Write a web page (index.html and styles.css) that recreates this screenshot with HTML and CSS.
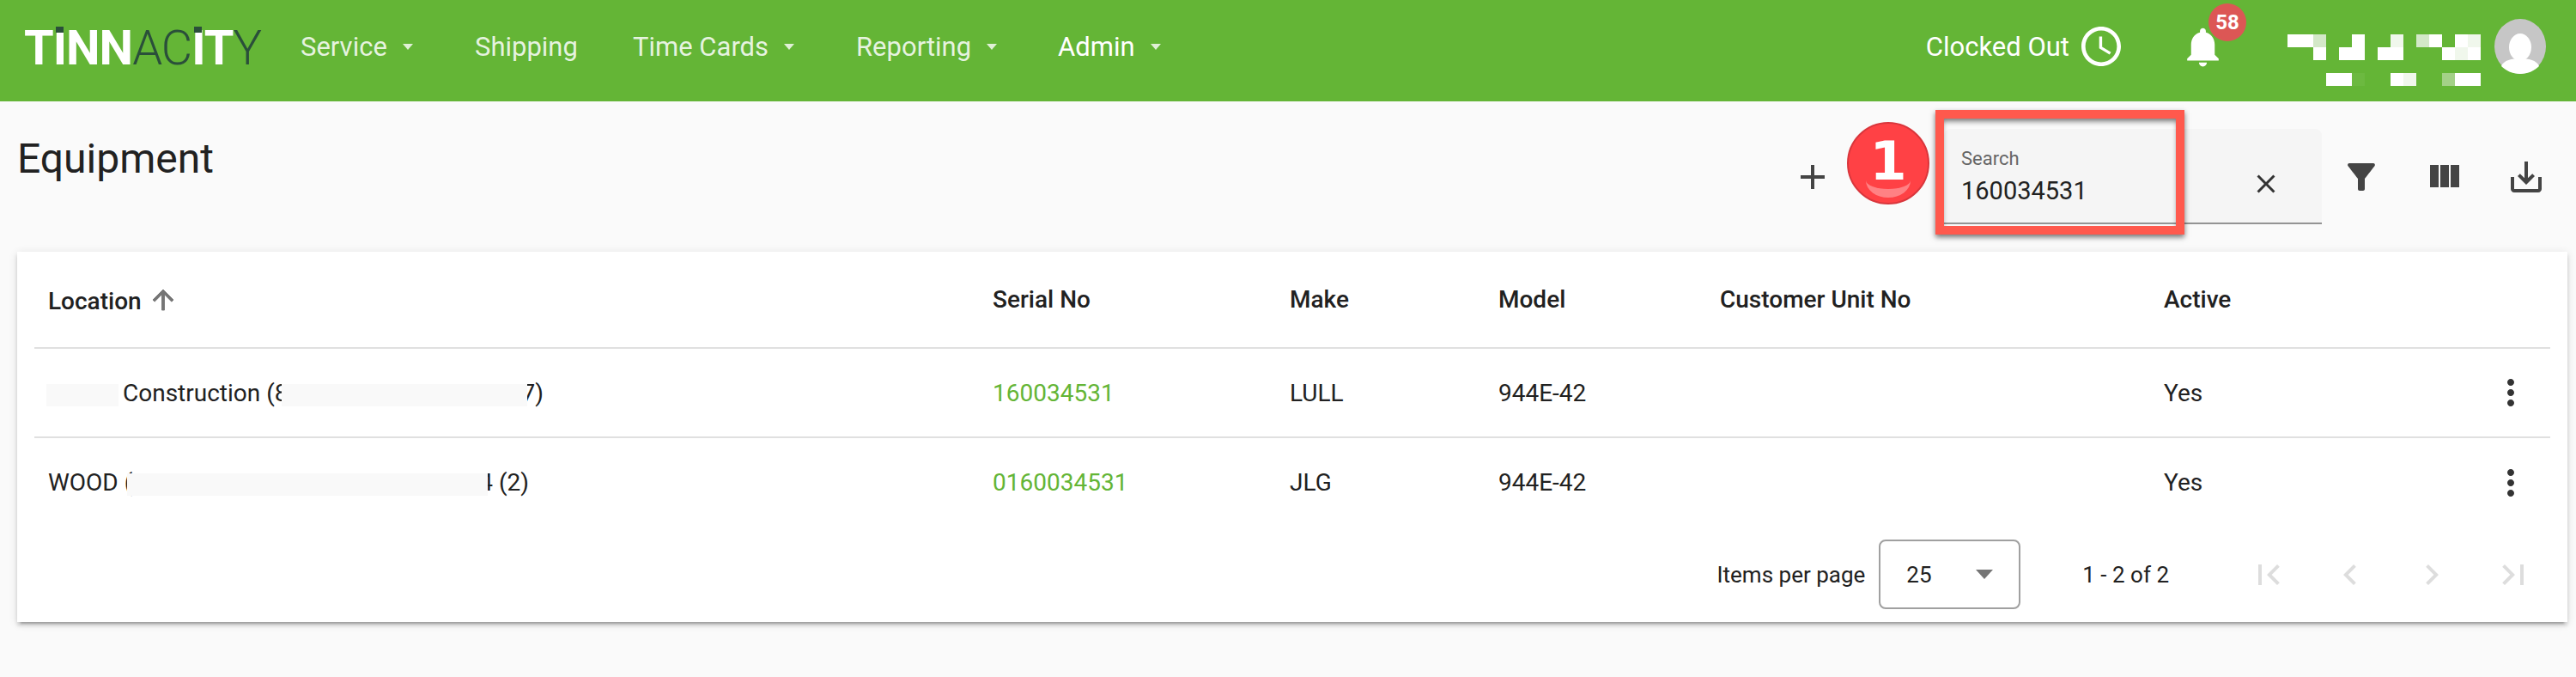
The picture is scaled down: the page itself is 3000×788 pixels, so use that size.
FILE: index.html
```html
<!DOCTYPE html>
<html lang="en">
<head>
  <meta charset="UTF-8">
  <title>Equipment</title>
  <link rel="stylesheet" href="styles.css">
</head>
<body>
  <header class="topbar">
    <div class="logo"><span class="logo-w">T<span class="logo-i">I</span>NN</span><span class="logo-d">AC</span><span class="logo-w"><span class="logo-i">I</span>T</span><span class="logo-d">Y</span></div>
    <nav class="nav">
      <a class="nav-item nav-service">Service<i class="caret"></i></a>
      <a class="nav-item nav-shipping">Shipping</a>
      <a class="nav-item nav-cards">Time Cards<i class="caret"></i></a>
      <a class="nav-item nav-reporting">Reporting<i class="caret"></i></a>
      <a class="nav-item nav-admin">Admin<i class="caret"></i></a>
    </nav>
    <div class="clocked">
      <span>Clocked Out</span>
      <svg class="clock" viewBox="2 2 20 20"><path fill="#fff" d="M11.99 2C6.47 2 2 6.48 2 12s4.47 10 9.99 10C17.52 22 22 17.52 22 12S17.52 2 11.99 2zM12 20c-4.42 0-8-3.58-8-8s3.58-8 8-8 8 3.58 8 8-3.58 8-8 8zm.5-13H11v6l5.25 3.15.75-1.23-4.5-2.67z"/></svg>
    </div>
    <div class="bell">
      <svg viewBox="0 0 24 24"><path fill="#fff" d="M12 22c1.1 0 2-.9 2-2h-4c0 1.1.89 2 2 2zm6-6v-5c0-3.07-1.64-5.64-4.5-6.32V4c0-.83-.67-1.5-1.5-1.5s-1.5.67-1.5 1.5v.68C7.63 5.36 6 7.92 6 11v5l-2 2v1h16v-1l-2-2z"/></svg>
      <span class="badge">58</span>
    </div>
    <svg class="user-mask" viewBox="0 0 225 60">
      <g fill="#fff">
        <rect x="0" y="0" width="30" height="15"/><rect x="30" y="15" width="15" height="15"/>
        <rect x="75" y="0" width="15" height="15"/><rect x="60" y="15" width="30" height="15"/>
        <rect x="105" y="15" width="30" height="15"/>
        <rect x="165" y="0" width="15" height="15"/><rect x="180" y="15" width="15" height="15"/>
        <rect x="195" y="0" width="15" height="15"/><rect x="210" y="15" width="15" height="15"/>
        <rect x="45" y="45" width="30" height="15"/><rect x="120" y="45" width="15" height="15"/><rect x="195" y="45" width="30" height="15"/>
      </g>
      <g fill="#d3e8c8"><rect x="30" y="0" width="15" height="15"/><rect x="150" y="0" width="15" height="15"/></g>
      <g fill="#f0f7ec"><rect x="120" y="0" width="15" height="15"/><rect x="210" y="0" width="15" height="15"/><rect x="195" y="15" width="15" height="15"/><rect x="135" y="45" width="15" height="15"/></g>
      <rect x="75" y="45" width="15" height="15" fill="#6cb940"/>
      <rect x="180" y="45" width="15" height="15" fill="#a3d187"/>
    </svg>
    <svg class="avatar" viewBox="0 0 60 64">
      <ellipse cx="30" cy="32" rx="30" ry="32" fill="#c6c6c6"/>
      <ellipse cx="30" cy="33" rx="13" ry="16" fill="#fff"/>
      <path fill="#fff" d="M8 55c3-7 12-9 22-9s19 2 22 9c-5 5-13 9-22 9S13 60 8 55z"/>
    </svg>
  </header>

  <main>
    <div class="toolbar">
      <h1 class="title">Equipment</h1>
      <div class="tools">
        <button class="icon-btn"><svg viewBox="0 0 24 24"><path d="M19 13h-6v6h-2v-6H5v-2h6V5h2v6h6v2z"/></svg></button>
        <div class="search">
          <div class="search-label">Search</div>
          <div class="search-value">160034531</div>
          <svg class="search-clear" viewBox="0 0 24 24"><path d="M19 6.41L17.59 5 12 10.59 6.41 5 5 6.41 10.59 12 5 17.59 6.41 19 12 13.41 17.59 19 19 17.59 13.41 12z"/></svg>
          <div class="callout-box"></div>
          <div class="callout-num">1</div>
        </div>
        <button class="icon-btn first"><svg viewBox="0 0 24 24"><path d="M4.25 5.61C6.27 8.2 10 13 10 13v6c0 .55.45 1 1 1h2c.55 0 1-.45 1-1v-6s3.72-4.8 5.74-7.39c.51-.66.04-1.61-.79-1.61H5.04c-.83 0-1.3.95-.79 1.61z"/></svg></button>
        <button class="icon-btn"><svg viewBox="0 0 24 24"><path d="M10 18h5V5h-5v13zm-6 0h5V5H4v13zM16 5v13h5V5h-5z"/></svg></button>
        <button class="icon-btn"><svg viewBox="0 0 24 24"><path d="M19 12v7H5v-7H3v7c0 1.1.9 2 2 2h14c1.1 0 2-.9 2-2v-7h-2zm-6 .67l2.59-2.58L17 11.5l-5 5-5-5 1.41-1.41L11 12.67V3h2z"/></svg></button>
      </div>
    </div>

    <section class="card">
      <table class="grid">
        <colgroup>
          <col class="c-location"><col class="c-serial"><col class="c-make"><col class="c-model"><col class="c-unit"><col class="c-active"><col>
        </colgroup>
        <thead>
          <tr>
            <th>Location <svg class="sort" viewBox="0 0 24 24"><path d="M4 12l1.41 1.41L11 7.83V20h2V7.83l5.58 5.59L20 12l-8-8-8 8z"/></svg></th>
            <th>Serial No</th>
            <th>Make</th>
            <th>Model</th>
            <th>Customer Unit No</th>
            <th>Active</th>
            <th></th>
          </tr>
        </thead>
        <tbody>
          <tr>
            <td><span class="mask m1"></span>Construction (8<span class="mask m2"></span>7)</td>
            <td class="link">160034531</td>
            <td>LULL</td>
            <td>944E-42</td>
            <td></td>
            <td>Yes</td>
            <td class="more"><svg viewBox="0 0 24 24"><path d="M12 8c1.1 0 2-.9 2-2s-.9-2-2-2-2 .9-2 2 .9 2 2 2zm0 2c-1.1 0-2 .9-2 2s.9 2 2 2 2-.9 2-2-.9-2-2-2zm0 6c-1.1 0-2 .9-2 2s.9 2 2 2 2-.9 2-2-.9-2-2-2z"/></svg></td>
          </tr>
          <tr>
            <td>WOOD (<span class="mask m3"></span>4 (2)</td>
            <td class="link">0160034531</td>
            <td>JLG</td>
            <td>944E-42</td>
            <td></td>
            <td>Yes</td>
            <td class="more"><svg viewBox="0 0 24 24"><path d="M12 8c1.1 0 2-.9 2-2s-.9-2-2-2-2 .9-2 2 .9 2 2 2zm0 2c-1.1 0-2 .9-2 2s.9 2 2 2 2-.9 2-2-.9-2-2-2zm0 6c-1.1 0-2 .9-2 2s.9 2 2 2 2-.9 2-2-.9-2-2-2z"/></svg></td>
          </tr>
        </tbody>
      </table>
      <div class="paginator">
        <span>Items per page</span>
        <div class="page-size"><span>25</span><i class="select-arrow"></i></div>
        <span class="range">1 - 2 of 2</span>
        <div class="pager">
          <svg viewBox="0 0 24 24"><path d="M18.41 16.59L13.82 12l4.59-4.59L17 6l-6 6 6 6zM6 6h2v12H6z"/></svg>
          <svg viewBox="0 0 24 24"><path d="M15.41 7.41L14 6l-6 6 6 6 1.41-1.41L10.83 12z"/></svg>
          <svg viewBox="0 0 24 24"><path d="M10 6L8.59 7.41 13.17 12l-4.58 4.59L10 18l6-6z"/></svg>
          <svg viewBox="0 0 24 24"><path d="M5.59 7.41L10.18 12l-4.59 4.59L7 18l6-6-6-6zM16 6h2v12h-2z"/></svg>
        </div>
      </div>
    </section>
  </main>
</body>
</html>
```

FILE: styles.css
```css
* {
  box-sizing: border-box;
}

body {
  margin: 0;
  height: 788px;
  overflow: hidden;
  background: #fafafa;
  color: #212121;
  font-family: Roboto, sans-serif;
  font-size: 28px;
}

/* top bar */
.topbar {
  display: flex;
  align-items: center;
  height: 118px;
  padding: 0 35px 10px 28px;
  background: #64b536;
  color: #fff;
  font-size: 31px;
}

.logo {
  width: 322px;
  margin-top: 4px;
  font-size: 56px;
  line-height: 56px;
  letter-spacing: -1px;
  white-space: nowrap;
}

.logo-w {
  color: #fff;
  font-weight: 700;
}

.logo-d {
  color: #2a4f3a;
  font-weight: 300;
}

.logo-i {
  position: relative;
}

.logo-i::before {
  content: "";
  position: absolute;
  top: 8px;
  left: 3px;
  width: 9px;
  height: 7px;
  background: #2a4f3a;
}

.nav {
  display: flex;
  flex: 1;
}

.nav-item {
  display: flex;
  align-items: center;
  color: rgba(255, 255, 255, 0.85);
  white-space: nowrap;
}

.nav-service { width: 203px; }
.nav-shipping { width: 184px; }
.nav-cards { width: 260px; }
.nav-reporting { width: 235px; }
.nav-admin { color: #fff; }

.caret {
  width: 0;
  height: 0;
  margin-left: 18px;
  border: 6px solid transparent;
  border-top: 7px solid rgba(255, 255, 255, 0.8);
  border-bottom: 0;
}

.clocked {
  display: flex;
  align-items: center;
  gap: 14px;
  margin-right: 68px;
}

.clock {
  width: 46px;
  height: 46px;
}

.bell {
  position: relative;
  width: 55px;
  height: 55px;
  margin-right: 71px;
}

.bell svg {
  display: block;
  width: 55px;
  height: 55px;
}

.badge {
  position: absolute;
  top: -23px;
  left: 34px;
  width: 44px;
  height: 44px;
  border-radius: 50%;
  background: #dc5755;
  font-size: 24px;
  font-weight: 700;
  line-height: 44px;
  text-align: center;
}

.user-mask {
  width: 225px;
  height: 60px;
  margin-top: 32px;
}

.avatar {
  width: 60px;
  height: 64px;
  margin-left: 16px;
}

/* toolbar */
.toolbar {
  display: flex;
  justify-content: space-between;
  height: 175px;
  padding: 32px 10px 0 20px;
}

.title {
  margin: 11px 0 0;
  font-size: 48px;
  font-weight: 400;
  line-height: 48px;
}

.tools {
  display: flex;
  align-items: center;
  height: 111px;
}

.icon-btn {
  display: flex;
  align-items: center;
  justify-content: center;
  width: 96px;
  height: 96px;
  padding: 0;
  border: 0;
  background: none;
}

.icon-btn.first {
  margin-left: -2px;
}

.icon-btn svg {
  width: 48px;
  height: 48px;
  fill: #444;
}

.search {
  position: relative;
  width: 440px;
  height: 111px;
  margin-left: 105px;
  padding: 24px 22px 0 20px;
  background: #f5f5f5;
  border-bottom: 2px solid #949494;
  border-radius: 8px 8px 0 0;
}

.search-label {
  color: #666;
  font-size: 22px;
  line-height: 22px;
}

.search-value {
  margin-top: 8px;
  font-size: 29px;
  line-height: 36px;
}

.search-clear {
  position: absolute;
  top: 46px;
  right: 47px;
  width: 36px;
  height: 36px;
  fill: #333;
}

/* annotation laid over the search field */
.callout-box {
  position: absolute;
  top: -22px;
  left: -10px;
  width: 290px;
  height: 145px;
  border: 10px solid #ff594d;
  box-shadow: 0 3px 6px rgba(0, 0, 0, 0.55), inset 0 5px 6px -2px rgba(0, 0, 0, 0.55);
}

.callout-num {
  position: absolute;
  top: -8px;
  left: -113px;
  width: 96px;
  height: 96px;
  overflow: hidden;
  border: 2px solid #d9363c;
  border-radius: 50%;
  background: #ff4145;
  color: #fff;
  font-family: "DejaVu Sans", sans-serif;
  font-size: 62px;
  font-weight: 700;
  line-height: 88px;
  text-align: center;
}

.callout-num::after {
  content: "";
  position: absolute;
  left: 20px;
  bottom: 6px;
  width: 52px;
  height: 30px;
  border-bottom: 10px solid #ff8184;
  border-radius: 50%;
}

/* equipment table */
.card {
  height: 431px;
  margin: 0 10px 0 20px;
  padding: 0 20px;
  background: #fff;
  box-shadow: 0 6px 2px -4px rgba(0, 0, 0, 0.2), 0 4px 4px rgba(0, 0, 0, 0.14), 0 2px 10px rgba(0, 0, 0, 0.12);
}

.grid {
  width: 100%;
  border-collapse: collapse;
  table-layout: fixed;
}

.c-location { width: 1100px; }
.c-serial { width: 346px; }
.c-make { width: 243px; }
.c-model { width: 258px; }
.c-unit { width: 517px; }
.c-active { width: 380px; }

.grid th,
.grid td {
  padding: 0 16px;
  border-bottom: 2px solid #e0e0e0;
  font-size: 28px;
  text-align: left;
  white-space: nowrap;
}

.grid tbody tr:last-child td {
  border-bottom: 0;
}

.grid th {
  height: 112px;
  font-weight: 500;
}

.grid td {
  height: 104px;
}

.sort {
  width: 36px;
  height: 36px;
  vertical-align: -7px;
  fill: #757575;
  stroke: #757575;
  stroke-width: 0.6;
}

.link {
  color: #64b536;
}

.more {
  text-align: right;
}

.more svg {
  display: block;
  width: 48px;
  height: 48px;
  margin-left: auto;
  margin-right: 21px;
  fill: #333;
}

.mask {
  position: relative;
  display: inline-block;
  height: 26px;
  background: #f9f9f9;
  vertical-align: -6px;
}

.m1 { width: 84px; margin: 0 5px 0 -2px; }
.m2 { width: 286px; margin: 0 -6px 0 -8px; }
.m3 { width: 420px; margin: 0 -10px 0 -6px; }

.paginator {
  display: flex;
  align-items: center;
  justify-content: flex-end;
  height: 111px;
  font-size: 26px;
}

.page-size {
  display: flex;
  align-items: center;
  justify-content: space-between;
  width: 165px;
  height: 81px;
  margin: 0 72px 0 16px;
  padding: 0 30px 0 30px;
  border: 2px solid #a0a0a0;
  border-radius: 8px;
}

.select-arrow {
  width: 0;
  height: 0;
  border: 10px solid transparent;
  border-top: 11px solid #757575;
  border-bottom: 0;
}

.pager {
  display: flex;
  margin-left: 45px;
  padding-right: 19px;
}

.pager svg {
  width: 48px;
  height: 48px;
  margin-left: 47px;
  fill: #ddd;
}
```
